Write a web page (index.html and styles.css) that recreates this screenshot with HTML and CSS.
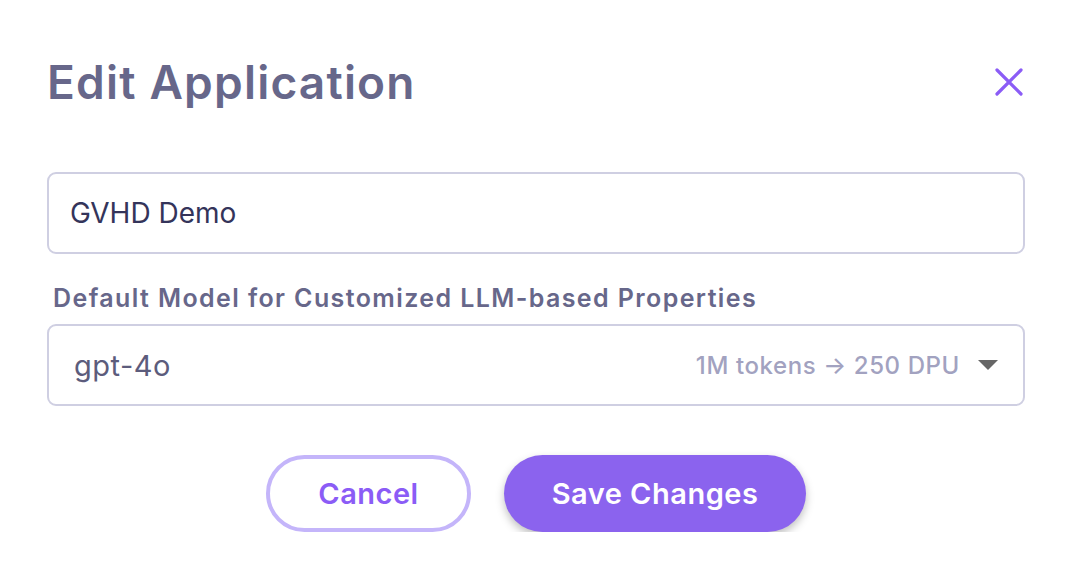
FILE: index.html
```html
<!DOCTYPE html>
<html lang="en">
<head>
<meta charset="utf-8">
<title>Edit Application</title>
<link rel="stylesheet" href="styles.css">
</head>
<body>
<div class="dialog">
  <div class="header">
    <h1 class="title">Edit Application</h1>
    <button class="close" aria-label="Close">
      <svg width="28" height="28" viewBox="0 0 28 28"><path d="M2 2 L26 26 M26 2 L2 26" stroke="#8b5cf6" stroke-width="3.2" stroke-linecap="round"/></svg>
    </button>
  </div>
  <div class="field">
    <span class="field-text">GVHD Demo</span>
  </div>
  <div class="label">Default Model for Customized LLM-based Properties</div>
  <div class="select">
    <span class="select-value">gpt-4o</span>
    <span class="select-meta">1M tokens → 250 DPU</span>
    <span class="caret"></span>
  </div>
  <div class="actions">
    <button class="btn btn-outline">Cancel</button>
    <button class="btn btn-primary">Save Changes</button>
  </div>
</div>
</body>
</html>
```
FILE: styles.css
```css
* { box-sizing: border-box; }
html, body { margin: 0; padding: 0; background: #ffffff; }
body { font-family: Inter, "Noto Sans", sans-serif; }

.dialog {
  padding: 59px 47px 0;
}

.header {
  display: flex;
  justify-content: space-between;
  align-items: center;
  height: 46px;
}
.title {
  margin: 0;
  font-size: 46px;
  line-height: 46px;
  font-weight: 600;
  color: #67678a;
  letter-spacing: 1.2px;
}
.close {
  border: 0;
  background: none;
  padding: 0;
  margin-right: 2px;
  width: 28px;
  height: 28px;
  display: flex;
  cursor: pointer;
}

.field {
  margin-top: 67px;
  height: 82px;
  border: 2px solid #cfcfe2;
  border-radius: 9px;
  display: flex;
  align-items: center;
  padding: 0 21px;
}
.field-text {
  font-size: 28px;
  color: #34345a;
}

.label {
  margin-top: 30px;
  padding-left: 6px;
  font-size: 25px;
  line-height: 28px;
  font-weight: 600;
  color: #67678a;
  letter-spacing: 1.4px;
}

.select {
  margin-top: 12px;
  height: 82px;
  border: 2px solid #cfcfe2;
  border-radius: 9px;
  display: flex;
  align-items: center;
  padding: 0 25px;
}
.select-value {
  flex: 1;
  font-size: 29px;
  color: #5c5c7c;
  letter-spacing: 0.5px;
}
.select-meta {
  font-size: 24px;
  font-weight: 500;
  color: #a2a2c0;
  margin-right: 18px;
  letter-spacing: 0.6px;
}
.caret {
  width: 0;
  height: 0;
  border-left: 10px solid transparent;
  border-right: 10px solid transparent;
  border-top: 10px solid #666666;
}

.actions {
  margin-top: 49px;
  display: flex;
  justify-content: center;
  gap: 33px;
}
.btn {
  height: 77px;
  border-radius: 39px;
  font-family: Inter, "Noto Sans", sans-serif;
  font-size: 29px;
  font-weight: 600;
  letter-spacing: 0.5px;
  cursor: pointer;
}
.btn-outline {
  width: 205px;
  background: #ffffff;
  border: 4px solid #c4b5fa;
  color: #8b5cf6;
}
.btn-primary {
  width: 302px;
  background: #8b63ee;
  border: 0;
  color: #ffffff;
  box-shadow: 0 4px 8px rgba(0, 0, 0, 0.25);
}
```
